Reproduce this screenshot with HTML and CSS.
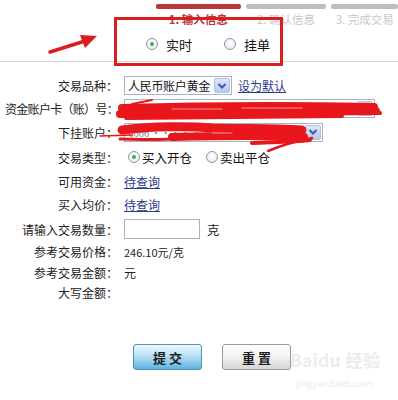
FILE: index.html
```html
<!DOCTYPE html>
<html lang="zh">
<head>
<meta charset="utf-8">
<link rel="stylesheet" href="styles.css">
</head>
<body>
<div class="page">
  <div class="steps">
    <div class="step step-1 active"><div class="bar"></div><div class="label">1. 输入信息</div></div>
    <div class="step step-2"><div class="bar"></div><div class="label">2. 确认信息</div></div>
    <div class="step step-3"><div class="bar"></div><div class="label">3. 完成交易</div></div>
  </div>
  <div class="mode">
    <span class="opt"><span class="radio checked"></span>实时</span>
    <span class="opt"><span class="radio"></span>挂单</span>
  </div>
  <div class="divider"></div>

  <div class="form">
    <div class="row r1"><div class="lbl">交易品种：</div><div class="val"><div class="select s1"><span class="txt">人民币账户黄金</span><span class="btn"><svg viewBox="0 0 10 8" width="10" height="8"><path d="M1.5 2 L5 5.5 L8.5 2" fill="none" stroke="#3a5aa8" stroke-width="2"/></svg></span></div><a class="link">设为默认</a></div></div>
    <div class="row r2"><div class="lbl lbl-wide">资金账户卡（账）号：</div><div class="val"><div class="select s2"><span class="txt faint">·ᴗᴗ· ·ᴗᴗᴗᴗᴗᴗᴗᴗᴗᴗ ᴗᴗ</span><span class="btn"><svg viewBox="0 0 10 8" width="10" height="8"><path d="M1.5 2 L5 5.5 L8.5 2" fill="none" stroke="#3a5aa8" stroke-width="2"/></svg></span></div></div></div>
    <div class="row r3"><div class="lbl">下挂账户：</div><div class="val"><div class="select s3"><span class="txt faint">6666 ···· ···· ·· 1</span><span class="btn"><svg viewBox="0 0 10 8" width="10" height="8"><path d="M1.5 2 L5 5.5 L8.5 2" fill="none" stroke="#3a5aa8" stroke-width="2"/></svg></span></div></div></div>
    <div class="row r4"><div class="lbl">交易类型：</div><div class="val"><span class="opt2"><span class="radio checked"></span>买入开仓</span><span class="opt2"><span class="radio"></span>卖出平仓</span></div></div>
    <div class="row r5"><div class="lbl">可用资金：</div><div class="val"><a class="link">待查询</a></div></div>
    <div class="row r6"><div class="lbl">买入均价：</div><div class="val"><a class="link">待查询</a></div></div>
    <div class="row r7"><div class="lbl">请输入交易数量：</div><div class="val"><span class="input"></span><span class="unit">克</span></div></div>
    <div class="row r8"><div class="lbl">参考交易价格：</div><div class="val price">246.10元/克</div></div>
    <div class="row r9"><div class="lbl">参考交易金额：</div><div class="val">元</div></div>
    <div class="row r10"><div class="lbl">大写金额：</div><div class="val"></div></div>
  </div>

  <div class="actions">
    <button class="b submit">提 交</button>
    <button class="b reset">重 置</button>
  </div>

  <div class="watermark">
    <div class="wm-main">Bai<span class="paw">du</span> 经验</div>
    <div class="wm-sub">jingyan.baidu.com</div>
  </div>

  <div class="annot-box"></div>
  <svg class="annot-arrow" width="60" height="30" viewBox="0 0 60 30">
    <path d="M3 25 L38 14" stroke="#d81e1e" stroke-width="3.5" stroke-linecap="round" fill="none"/>
    <path d="M33 8 L50 9 L38 21 Z" fill="#d81e1e"/>
  </svg>
  <svg class="scribble" width="280" height="70" viewBox="0 0 280 70">
    <g fill="none" stroke="#e8171b" stroke-linecap="round">
      <path d="M10 13 C80 11 160 10 262 12" stroke-width="8"/>
      <path d="M8 19 C90 18 170 17 264 16" stroke-width="8"/>
      <path d="M14 23 C80 23 150 22 230 21" stroke-width="4"/>
      <path d="M240 16 L268 18" stroke-width="4"/>
      <path d="M20 9 L40 5" stroke-width="2"/>
      <path d="M10 35 C40 31 80 31 100 33 C130 34 160 33 190 35" stroke-width="9"/>
      <path d="M60 42 C100 41 150 40 192 42" stroke-width="8"/>
      <path d="M8 44 C20 44 40 45 58 44" stroke-width="3"/>
      <path d="M140 48 C160 47 180 47 198 45" stroke-width="4"/>
      <path d="M-12 41 L20 40" stroke-width="1.5"/>
      <path d="M156 56 C170 50 185 46 200 43" stroke-width="2.5"/>
    </g>
    <g fill="none" stroke="#ffffff" stroke-linecap="round" opacity="0.55">
      <path d="M60 14 L110 14" stroke-width="1"/>
      <path d="M130 13 L190 13" stroke-width="1"/>
      <path d="M100 38 L120 38" stroke-width="1"/>
    </g>
  </svg>
</div>
</body>
</html>
```

FILE: styles.css
```css
* { box-sizing: border-box; }
html, body { margin: 0; padding: 0; background: #fff; }
body {
  font-family: "Noto Sans CJK SC", "Liberation Sans", sans-serif;
  font-size: 12px;
  color: #222;
}
.page { position: relative; width: 398px; height: 400px; overflow: hidden; }

.steps { display: flex; padding: 4px 0 0 156px; gap: 5px; }
.step { display: flex; flex-direction: column; align-items: center; }
.step .bar { height: 5px; width: 100%; background: #bdbdbd; border-radius: 2px; }
.step.active .bar { background: #b9373b; }
.step-1 { width: 89px; }
.step-2 { width: 85px; }
.step-3 { width: 70px; }
.step .label { font-size: 11.5px; line-height: 14px; margin-top: 3px; color: #c8c8c8; white-space: nowrap; }
.step.active .label { color: #b9373b; font-weight: bold; }

.mode { display: flex; padding-left: 146px; gap: 32px; margin-top: 7px; height: 22px; align-items: center; font-size: 13px; color: #111; }
.opt { display: flex; align-items: center; gap: 8px; }

.radio {
  width: 12px; height: 12px; border-radius: 50%;
  border: 1px solid #8a97a6;
  background: radial-gradient(circle at 50% 40%, #ffffff 0%, #e6e9ee 100%);
  position: relative; display: inline-block; flex: none;
}
.radio.checked::after {
  content: ""; position: absolute; left: 3px; top: 3px; width: 4px; height: 4px; border-radius: 50%;
  background: #3fa94a;
}

.divider { height: 1px; background: #d6d6d6; margin-top: 6px; }

.form { padding-top: 12px; }
.row { display: flex; align-items: center; }
.lbl { width: 120px; text-align: right; padding-right: 2px; white-space: nowrap; color: #222; }
.lbl-wide { letter-spacing: -0.7px; }
.val { display: flex; align-items: center; padding-left: 4px; white-space: nowrap; }
.r1 { height: 23px; }
.r2 { height: 23px; }
.r3 { height: 24px; }
.r4 { height: 26px; }
.r5 { height: 22px; }
.r6 { height: 25px; }
.r7 { height: 24px; }
.r8 { height: 21px; }
.r9 { height: 20px; }
.r10 { height: 21px; }

.select {
  display: flex; align-items: center; justify-content: space-between;
  height: 19px; border: 1px solid #a5b4c8; background: #fff; padding: 0 1px 0 3px;
}
.select .txt { font-size: 12px; color: #111; letter-spacing: -0.3px; }
.select .txt.faint { color: #888; font-size: 10px; }
.select .btn {
  width: 16px; height: 15px; background: linear-gradient(#dce6f8, #b7c9ec);
  border: 1px solid #b2c2de; border-radius: 2px; display: flex; align-items: center; justify-content: center;
}
.s1 { width: 108px; }
.s2 { width: 251px; }
.s3 { width: 199px; }

.link { color: #2a3a8c; text-decoration: underline; margin-left: 6px; cursor: pointer; }
.r5 .link, .r6 .link { margin-left: 0; }

.opt2 { display: flex; align-items: center; gap: 2px; font-size: 12.5px; color: #111; }
.opt2 + .opt2 { margin-left: 14px; }
.r4 .val { padding-left: 8px; }

.input { width: 76px; height: 20px; border: 1px solid #a8b3c2; background: #fff; display: inline-block; }
.unit { margin-left: 7px; font-size: 12.5px; }
.price { font-size: 11px; }

.actions { display: flex; gap: 20px; padding-left: 133px; margin-top: 41px; }
.b {
  width: 69px; height: 26px; border-radius: 3px; font-family: "Noto Sans CJK SC", sans-serif;
  font-size: 13px; font-weight: bold; color: #1b1b1b; padding: 0; cursor: pointer;
}
.submit { border: 1px solid #4e93c0; background: linear-gradient(#eef8fd 0%, #b9e0f4 45%, #5fb3e0 100%); }
.reset { border: 1px solid #9a9a9a; background: linear-gradient(#ffffff 0%, #f2f2f2 50%, #d6d6d6 100%); }

.watermark { position: absolute; left: 290px; top: 350px; color: #ececec; text-align: center; }
.wm-main { font-size: 17px; font-weight: bold; letter-spacing: 0.5px; line-height: 20px; }
.wm-sub { font-size: 9px; line-height: 12px; margin-top: 8px; }

.annot-box { position: absolute; left: 114px; top: 17px; width: 169px; height: 49px; border: 3px solid #d81e1e; }
.annot-arrow { position: absolute; left: 47px; top: 27px; }
.scribble { position: absolute; left: 112px; top: 95px; overflow: visible; }
```
